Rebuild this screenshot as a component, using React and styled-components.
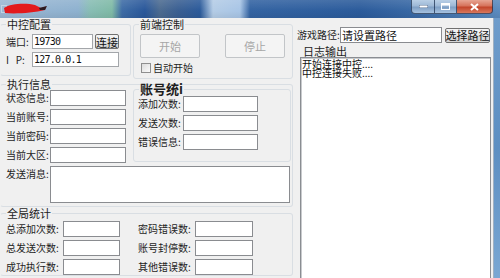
import React from 'react';
import styled, { createGlobalStyle, css } from 'styled-components';

const GlobalStyle = createGlobalStyle`
  html, body { margin: 0; padding: 0; }
  body {
    width: 500px;
    height: 278px;
    overflow: hidden;
    background: #5f8ebf;
    font-family: "Noto Sans CJK SC", "Liberation Sans", sans-serif;
  }
`;

const Window = styled.div`
  width: 500px;
  height: 278px;
  display: flex;
  flex-direction: column;
  overflow: hidden;
`;

const TitleBar = styled.div`
  height: 18px;
  flex: none;
  display: flex;
  justify-content: space-between;
  align-items: flex-start;
  padding-right: 7px;
  background:
    linear-gradient(180deg, rgba(255,255,255,0.12) 0%, rgba(255,255,255,0) 60%, rgba(0,0,0,0.06) 100%),
    linear-gradient(90deg, #9bb7d3 0px, #8eb1cf 78px, #88bdb4 90px, #7fbaa6 112px, #3e6ca6 122px,
      #29579a 145px, #4c6b90 160px, #3a5f92 178px, #2b5a9a 200px, #b4cce6 213px, #a8c5e6 240px,
      #3363a2 250px, #2b5b9b 360px, #3a6aa6 420px, #5b8bbf 500px);
`;

const Scribble = styled.svg`
  margin: 2px 0 0 1px;
`;

const Caption = styled.div`
  display: flex;
  height: 14px;
`;

const CapButton = styled.div`
  width: ${p => p.$w}px;
  height: 13px;
  border: 1px solid rgba(30, 50, 80, 0.75);
  border-top: none;
  display: flex;
  align-items: center;
  justify-content: center;
  background: linear-gradient(180deg, #b9cfe6 0%, #9db8d6 45%, #7f9fc4 55%, #a6c2e0 100%);
  ${p => p.$first && css`border-bottom-left-radius: 4px;`}
  ${p => p.$close && css`
    border-bottom-right-radius: 4px;
    border-left: none;
    background: linear-gradient(180deg, #e7a593 0%, #d6735c 45%, #c2452b 55%, #d9785c 100%);
  `}
  ${p => p.$mid && css`border-left: none;`}
`;

const Body = styled.div`
  flex: 1;
  display: flex;
  min-height: 0;
`;

const Client = styled.div`
  flex: 1;
  display: flex;
  background: #f0f0f0;
  border-right: 1px solid #9fb0c2;
  color: #1e1e1e;
  font-size: 10px;
  line-height: 16px;
`;

const Frame = styled.div`
  width: 6px;
  flex: none;
  background: linear-gradient(180deg, #6e9ccb 0%, #5d8fc2 50%, #7aa7d3 100%);
`;

const LeftPane = styled.div`
  width: 293px;
  flex: none;
  display: flex;
  flex-direction: column;
`;

const TopRow = styled.div`
  height: 61px;
  display: flex;
  gap: 2px;
  align-items: flex-start;
`;

const Group = styled.fieldset`
  margin: 0;
  padding: ${p => p.$pad || '0'};
  border: 1px solid #d9dee3;
  border-radius: 3px;
  min-width: 0;
  width: ${p => p.$w}px;
  box-sizing: border-box;
  ${p => p.$noLeft && css`border-left-color: transparent;`}
`;

const Legend = styled.legend`
  padding: 0 1px;
  margin-left: ${p => p.$ml || 5}px;
  font-size: ${p => p.$bold ? '13px' : '11px'};
  font-weight: ${p => p.$bold ? 'bold' : 'normal'};
  line-height: ${p => p.$lh || 12}px;
  color: #1e1e1e;
`;

const Row = styled.div`
  display: flex;
  align-items: center;
  height: ${p => p.$h || 16}px;
  margin-top: ${p => p.$mt || 0}px;
  padding-left: ${p => p.$pl || 0}px;
`;

const Label = styled.span`
  width: ${p => p.$w}px;
  margin-left: ${p => p.$ml || 0}px;
  flex: none;
  white-space: nowrap;
  font-size: 10px;
  line-height: 12px;
  ${p => p.$top && css`align-self: flex-start; margin-top: 2px;`}
`;

const Input = styled.div`
  width: ${p => p.$w}px;
  height: ${p => p.$h || 16}px;
  box-sizing: border-box;
  flex: none;
  background: #fff;
  border: 1px solid ${p => p.$dark ? '#8a8c90' : '#a3a6aa'};
  font-family: "DejaVu Sans Mono", "Noto Sans CJK SC", monospace;
  font-size: 10px;
  line-height: 14px;
  padding-left: 1px;
  letter-spacing: ${p => p.$spaced ? '-0.8px' : '0'};
  overflow: hidden;
  white-space: nowrap;
  color: #111;
  ${p => p.$cjk && css`
    font-family: "Noto Sans CJK SC", sans-serif;
    font-size: 11px;
    letter-spacing: 0;
  `}
`;

const Button = styled.div`
  width: ${p => p.$w}px;
  height: ${p => p.$h || 15}px;
  margin-left: ${p => p.$ml || 0}px;
  box-sizing: border-box;
  flex: none;
  display: flex;
  align-items: center;
  justify-content: center;
  font-size: 11px;
  line-height: 12px;
  white-space: nowrap;
  border-radius: 2px;
  border: 1px solid #707070;
  background: linear-gradient(180deg, #f4f4f4 0%, #ebebeb 48%, #dcdcdc 52%, #d4d4d4 100%);
  color: #111;
  ${p => p.$disabled && css`
    border-color: #c2c5c8;
    background: #f4f4f4;
    color: #a6a6a6;
  `}
`;

const ButtonRow = styled.div`
  display: flex;
  gap: 25px;
  padding-left: 6px;
`;

const Check = styled.span`
  width: 10px;
  height: 10px;
  box-sizing: border-box;
  border: 1px solid #8f8f8f;
  background: linear-gradient(135deg, #dcdcdc, #fbfbfb);
  margin: 0 2px 0 7px;
`;

const Cols = styled.div`
  display: flex;
  align-items: flex-start;
`;

const Col = styled.div`
  width: ${p => p.$w}px;
  display: flex;
  flex-direction: column;
  gap: 3px;
  padding-left: ${p => p.$pl || 0}px;
  box-sizing: border-box;
  flex: none;
`;

const InnerGroup = styled(Group)`
  margin-top: -7px;
  padding: 1px 0 11px 0;
  display: flex;
  flex-direction: column;
  gap: 3px;
`;

const RightPane = styled.div`
  flex: 1;
  display: flex;
  flex-direction: column;
  min-width: 0;
`;

const PathRow = styled.div`
  display: flex;
  align-items: center;
  margin-top: 9px;
  padding-left: 4px;
  height: 16px;
`;

const LogTitle = styled.div`
  padding-left: 10px;
  margin-top: 2px;
  font-size: 11px;
  line-height: 12px;
`;

const LogBox = styled.div`
  flex: 1;
  margin: 0 0 -4px 7px;
  width: 191px;
  box-sizing: border-box;
  background: #fff;
  border: 1px solid #8a8d92;
  box-shadow: inset 1px 1px 0 #c8cacd;
  padding: 1px 0 0 1px;
  font-size: 10px;
  line-height: 9px;
  color: #111;
`;

const LogLine = styled.div`
  white-space: nowrap;
`;

const SendRow = styled.div`
  display: flex;
  margin-top: 3px;
  padding-left: 5px;
`;

const stats = [
  ['总添加次数:', '密码错误数:'],
  ['总发送次数:', '账号封停数:'],
  ['成功执行数:', '其他错误数:'],
];

const App = () => (
  <Window>
    <GlobalStyle />
    <TitleBar>
      <Scribble width="48" height="13" viewBox="0 0 48 13">
        <rect x="0.5" y="3.5" width="5" height="7" fill="none" stroke="#e8eef4" strokeDasharray="1 1" />
        <path d="M3 6 C10 1 26 1 34 3 L40 6 L45 4.5 L44 8 C32 11 14 12 4 11 Z" fill="#e3191c" />
        <path d="M38 6 L46 4 L44 8 L39 8 Z" fill="#2a1a20" />
      </Scribble>
      <Caption>
        <CapButton $w={22} $first>
          <svg width="9" height="3"><rect width="9" height="3" fill="#fff" stroke="#33507a" strokeWidth="0.8" /></svg>
        </CapButton>
        <CapButton $w={21} $mid>
          <svg width="9" height="7"><rect x="0.5" y="0.5" width="8" height="6" fill="none" stroke="#fff" strokeWidth="1" /><rect x="1" y="1" width="7" height="1.5" fill="#fff" /></svg>
        </CapButton>
        <CapButton $w={35} $close>
          <svg width="9" height="8" viewBox="0 0 9 8"><path d="M1 1 L8 7 M8 1 L1 7" stroke="#fff" strokeWidth="2" /></svg>
        </CapButton>
      </Caption>
    </TitleBar>
    <Body>
      <Client>
        <LeftPane>
          <TopRow>
            <Group $w={131} $pad="4px 0 8px 0" $noLeft>
              <Legend $ml={5}>中控配置</Legend>
              <Row $h={15} $pl={5}>
                <Label $w={26}>端口:</Label>
                <Input $w={61} $h={15} $spaced>19730</Input>
                <Button $w={24} $ml={2}>连接</Button>
              </Row>
              <Row $h={15} $mt={3} $pl={5}>
                <Label $w={26}>I&nbsp;&nbsp;&nbsp;P:</Label>
                <Input $w={87} $h={15} $spaced>127.0.0.1</Input>
              </Row>
            </Group>
            <Group $w={160} $pad="4px 0 4px 0">
              <Legend $ml={5}>前端控制</Legend>
              <ButtonRow>
                <Button $w={60} $h={24} $disabled>开始</Button>
                <Button $w={60} $h={24} $disabled>停止</Button>
              </ButtonRow>
              <Row $h={13} $mt={3}>
                <Check />
                <Label $w={50}>自动开始</Label>
              </Row>
            </Group>
          </TopRow>

          <Group $w={293} $pad="0 0 3px 0" $noLeft>
            <Legend $ml={5} $lh={11}>执行信息</Legend>
            <Cols>
              <Col $w={132} $pl={5}>
                {['状态信息:', '当前账号:', '当前密码:', '当前大区:'].map(t => (
                  <Row key={t}>
                    <Label $w={44}>{t}</Label>
                    <Input $w={76} $dark />
                  </Row>
                ))}
              </Col>
              <InnerGroup $w={158}>
                <Legend $ml={5} $bold>账号统i</Legend>
                {['添加次数:', '发送次数:', '错误信息:'].map(t => (
                  <Row key={t} $pl={4}>
                    <Label $w={45}>{t}</Label>
                    <Input $w={75} $dark />
                  </Row>
                ))}
              </InnerGroup>
            </Cols>
            <SendRow>
              <Label $w={44} $top>发送消息:</Label>
              <Input $w={240} $h={37} $dark />
            </SendRow>
          </Group>

          <Group $w={293} $pad="2px 0 0 0" $noLeft>
            <Legend $ml={5}>全局统计</Legend>
            <Col $w={290} $pl={5}>
              {stats.map(([a, b]) => (
                <Row key={a}>
                  <Label $w={57}>{a}</Label>
                  <Input $w={57} $dark />
                  <Label $w={57} $ml={18}>{b}</Label>
                  <Input $w={58} $dark />
                </Row>
              ))}
            </Col>
          </Group>
        </LeftPane>

        <RightPane>
          <PathRow>
            <Label $w={43}>游戏路径:</Label>
            <Input $w={102} $dark $cjk>请设置路径</Input>
            <Button $w={45} $ml={3}>选择路径</Button>
          </PathRow>
          <LogTitle>日志输出</LogTitle>
          <LogBox>
            <LogLine>开始连接中控....</LogLine>
            <LogLine>中控连接失败....</LogLine>
          </LogBox>
        </RightPane>
      </Client>
      <Frame />
    </Body>
  </Window>
);

export default App;
